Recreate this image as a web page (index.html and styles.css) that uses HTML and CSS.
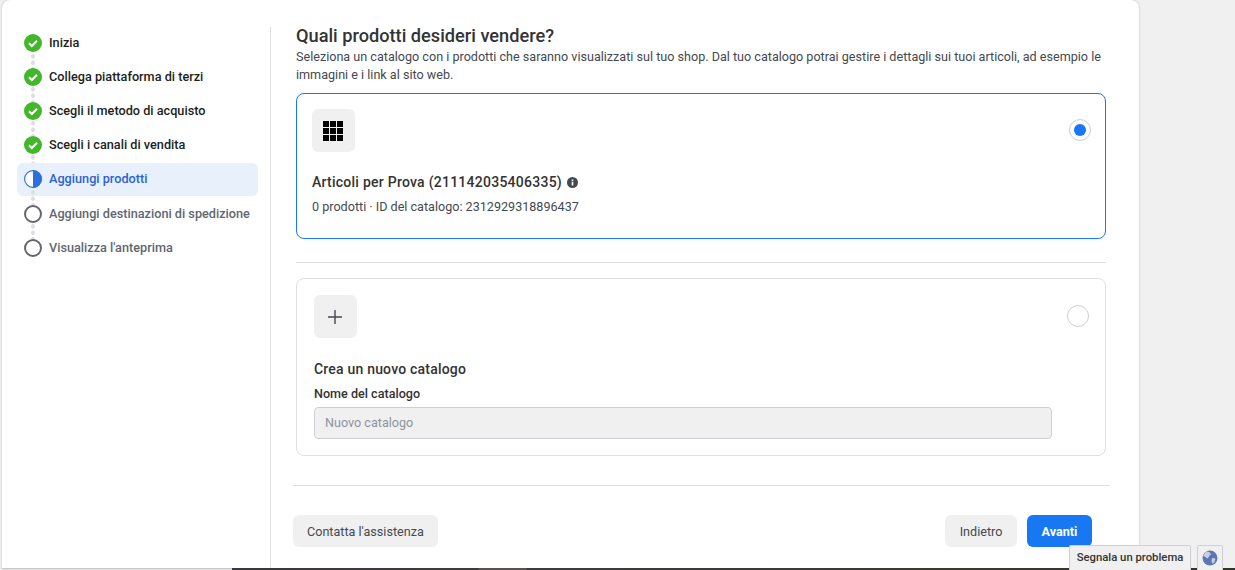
FILE: index.html
```html
<!DOCTYPE html>
<html lang="it">
<head>
<meta charset="utf-8">
<title>Quali prodotti desideri vendere?</title>
<link rel="stylesheet" href="styles.css">
</head>
<body>
<div class="card">
  <nav class="steps">
    <div class="step done"><span class="ico"><svg viewBox="0 0 18 18" width="18" height="18"><circle cx="9" cy="9" r="9" fill="#42b72a"/><path d="M5 9.3l2.8 2.7L13 6.8" fill="none" stroke="#fff" stroke-width="2"/></svg></span><span class="lab">Inizia</span></div>
    <div class="step done"><span class="ico"><svg viewBox="0 0 18 18" width="18" height="18"><circle cx="9" cy="9" r="9" fill="#42b72a"/><path d="M5 9.3l2.8 2.7L13 6.8" fill="none" stroke="#fff" stroke-width="2"/></svg></span><span class="lab">Collega piattaforma di terzi</span></div>
    <div class="step done"><span class="ico"><svg viewBox="0 0 18 18" width="18" height="18"><circle cx="9" cy="9" r="9" fill="#42b72a"/><path d="M5 9.3l2.8 2.7L13 6.8" fill="none" stroke="#fff" stroke-width="2"/></svg></span><span class="lab">Scegli il metodo di acquisto</span></div>
    <div class="step done"><span class="ico"><svg viewBox="0 0 18 18" width="18" height="18"><circle cx="9" cy="9" r="9" fill="#42b72a"/><path d="M5 9.3l2.8 2.7L13 6.8" fill="none" stroke="#fff" stroke-width="2"/></svg></span><span class="lab">Scegli i canali di vendita</span></div>
    <div class="step active"><span class="ico"><svg viewBox="0 0 18 18" width="18" height="18"><circle cx="9" cy="9" r="8.4" fill="#fff" stroke="#2d6fdf" stroke-width="1.1"/><path d="M9 0a9 9 0 0 1 0 18z" fill="#2d6fdf"/></svg></span><span class="lab">Aggiungi prodotti</span></div>
    <div class="step todo"><span class="ico"><svg viewBox="0 0 18 18" width="18" height="18"><circle cx="9" cy="9" r="8" fill="#fff" stroke="#65676b" stroke-width="2"/></svg></span><span class="lab">Aggiungi destinazioni di spedizione</span></div>
    <div class="step todo last"><span class="ico"><svg viewBox="0 0 18 18" width="18" height="18"><circle cx="9" cy="9" r="8" fill="#fff" stroke="#65676b" stroke-width="2"/></svg></span><span class="lab">Visualizza l'anteprima</span></div>
  </nav>
  <main class="main">
    <div class="body">
      <h1 class="title">Quali prodotti desideri vendere?</h1>
      <p class="intro">Seleziona un catalogo con i prodotti che saranno visualizzati sul tuo shop. Dal tuo catalogo potrai gestire i dettagli sui tuoi articoli, ad esempio le immagini e i link al sito web.</p>
      <section class="option selected">
        <div class="option-top">
          <span class="tile"><svg viewBox="0 0 20 20" width="20" height="20"><path fill="#000" d="M0 0h6v6H0zM7 0h6v6H7zM14 0h6v6h-6zM0 7h6v6H0zM7 7h6v6H7zM14 7h6v6h-6zM0 14h6v6H0zM7 14h6v6H7zM14 14h6v6h-6z"/></svg></span>
          <span class="radio on"></span>
        </div>
        <div class="opt-title">Articoli per Prova (211142035406335) <svg class="info" viewBox="0 0 12 12" width="11" height="11"><circle cx="6" cy="6" r="6" fill="#444950"/><path d="M5.1 5.2h1.8v4.1H5.1zM5.1 2.7h1.8v1.7H5.1z" fill="#fff"/></svg></div>
        <div class="opt-sub">0 prodotti · ID del catalogo: 2312929318896437</div>
      </section>
      <hr class="rule">
      <section class="option new">
        <div class="option-top">
          <span class="tile"><svg viewBox="0 0 16 16" width="16" height="16"><path d="M8 1v14M1 8h14" stroke="#444950" stroke-width="1.4" fill="none"/></svg></span>
          <span class="radio"></span>
        </div>
        <div class="opt-title">Crea un nuovo catalogo</div>
        <label class="field-label" for="nome">Nome del catalogo</label>
        <input id="nome" class="field" placeholder="Nuovo catalogo" disabled>
      </section>
    </div>
    <hr class="rule foot-rule">
    <footer class="foot">
      <button class="btn">Contatta l'assistenza</button>
      <div class="foot-right">
        <button class="btn narrow">Indietro</button>
        <button class="btn primary">Avanti</button>
      </div>
    </footer>
  </main>
</div>
<div class="strip"></div>
<div class="report">
  <span class="report-btn">Segnala un problema</span>
  <span class="globe"><svg viewBox="0 0 16 16" width="16" height="16"><circle cx="8" cy="8" r="7.5" fill="#5d77b0"/><path d="M5 1.5l3 1 1 2-2 1.5-1 2.500-2-1-2.500-1.500C2 3.500 3.500 2 5 1.500zM10 8l3.500.5-1 3.500-2 2-1-3z" fill="#c5d0e6"/></svg></span>
</div>
</body>
</html>
```
FILE: styles.css
```css
* { box-sizing: border-box; }
html, body { margin: 0; height: 100%; overflow: hidden; }
body {
  background: #f0f0f0;
  font-family: Roboto, "Liberation Sans", sans-serif;
  color: #1c1e21;
  padding-left: 2px;
  position: relative;
}
.card {
  width: 1137px;
  height: 569px;
  background: #fff;
  border-radius: 8px 8px 0 0;
  border-bottom: 1px solid #c8c8c8;
  display: flex;
  box-shadow: 0 0 2px rgba(0,0,0,.25);
  padding-top: 27px;
}
.steps {
  width: 269px;
  flex: none;
  border-right: 1px solid #dddfe2;
  padding: 0 12px 0 15px;
}
.step {
  height: 34px;
  display: flex;
  align-items: center;
  gap: 7px;
  padding-left: 7px;
  font-size: 12.7px;
  font-weight: 500;
  border-radius: 6px;
  position: relative;
}
.step.done:first-child { height: 33px; padding-bottom: 1px; }
.lab { padding-bottom: 2px; }
.todo .lab { padding-bottom: 1px; }
.ico { width: 18px; height: 18px; display: block; flex: none; position: relative; z-index: 1; }
.ico svg { display: block; }
.step:not(.last)::after {
  content: "";
  position: absolute;
  left: 14px;
  top: 26px;
  width: 4px;
  height: 16px;
  background: radial-gradient(circle, #dddfe2 2px, transparent 2.2px) 0 0 / 4px 6.500px repeat-y;
}
.active {
  height: 33px;
  padding-bottom: 1px;
  margin-top: 1px;
  margin-bottom: 1px;
  background: #e7f0fb;
  color: #2d62d0;
}
.todo { color: #606770; }
.main {
  flex: 1;
  min-width: 0;
  display: flex;
  flex-direction: column;
  padding-left: 22px;
}
.body { padding-left: 3px; width: 817px; }
.title { margin: -3px 0 0; font-size: 18.2px; line-height: 24px; font-weight: 500; color: #333; }
.intro { margin: 0 0 9px; font-size: 12.6px; line-height: 18px; color: #444950; width: 812px; }
.option { width: 810px; border: 1px solid #dddfe2; border-radius: 8px; background: #fff; }
.selected { height: 146px; border-color: #1877f2; padding: 15px 14px 0 15px; }
.new { height: 178px; padding: 16px 16px 0 17px; }
.option-top { display: flex; justify-content: space-between; align-items: flex-start; height: 43px; }
.tile { width: 43px; height: 43px; background: #f0f0f0; border-radius: 6px; display: flex; align-items: center; justify-content: center; }
.tile svg { margin-right: 1px; }
.radio { width: 22px; height: 22px; border: 1px solid #ccd0d5; border-radius: 50%; background: #fff; display: flex; align-items: center; justify-content: center; margin: 10px 0 0; }
.radio.on::before { content: ""; width: 12px; height: 12px; border-radius: 50%; background: #1877f2; }
.opt-title { font-size: 14px; font-weight: 500; line-height: 18px; color: #333; margin-top: 21px; letter-spacing: .25px; }
.info { vertical-align: -1px; margin-left: 1px; }
.opt-sub { font-size: 12.6px; line-height: 18px; color: #444950; margin-top: 7px; }
.new .opt-title { margin-top: 22px; letter-spacing: .2px; }
.field-label { display: block; font-size: 12.6px; font-weight: 500; line-height: 16px; color: #333; margin-top: 8px; }
.field { display: block; width: 738px; height: 32px; margin-top: 5px; background: #f0f0f0; border: 1px solid #ccd0d5; border-radius: 4px; padding: 0 10px 2px; font: 12.6px Roboto, sans-serif; }
.field::placeholder { color: #8d949e; opacity: 1; }
.rule { border: 0; border-top: 1px solid #dddfe2; margin: 23px 0 15px; width: 810px; }
.foot-rule { margin: 29px 0 0; width: 817px; }
.foot { width: 799px; display: flex; justify-content: space-between; margin-top: 29px; }
.foot-right { display: flex; gap: 10px; }
.btn { height: 32px; border: 0; border-radius: 6px; background: #f0f0f0; color: #444950; font: 12.6px Roboto, sans-serif; padding: 0 14px; }
.narrow { width: 72px; padding: 0; }
.primary { width: 65px; padding: 0; background: #1877f2; color: #fff; font-weight: 700; }
.strip { position: absolute; left: 232px; right: 0; bottom: 0; height: 2px; background: linear-gradient(90deg, #38383f 0, #423a3a 246px, #5a5050 247px, #5a5050 294px, #3c3c40 295px, #3a3a2c 70%, #33332e 100%); }
.report { position: absolute; left: 1069px; bottom: 0; display: flex; gap: 6px; align-items: flex-end; }
.report-btn { height: 25px; width: 122px; background: #f0f0f0; border: 1px solid #ccd0d5; border-bottom: 0; border-radius: 2px 2px 0 0; font-size: 11.3px; font-weight: 500; line-height: 24px; text-align: center; color: #333; }
.globe { width: 26px; height: 25px; background: #f0f0f0; border: 1px solid #ccd0d5; border-bottom: 0; border-radius: 2px 2px 0 0; display: flex; align-items: center; justify-content: center; }
```
